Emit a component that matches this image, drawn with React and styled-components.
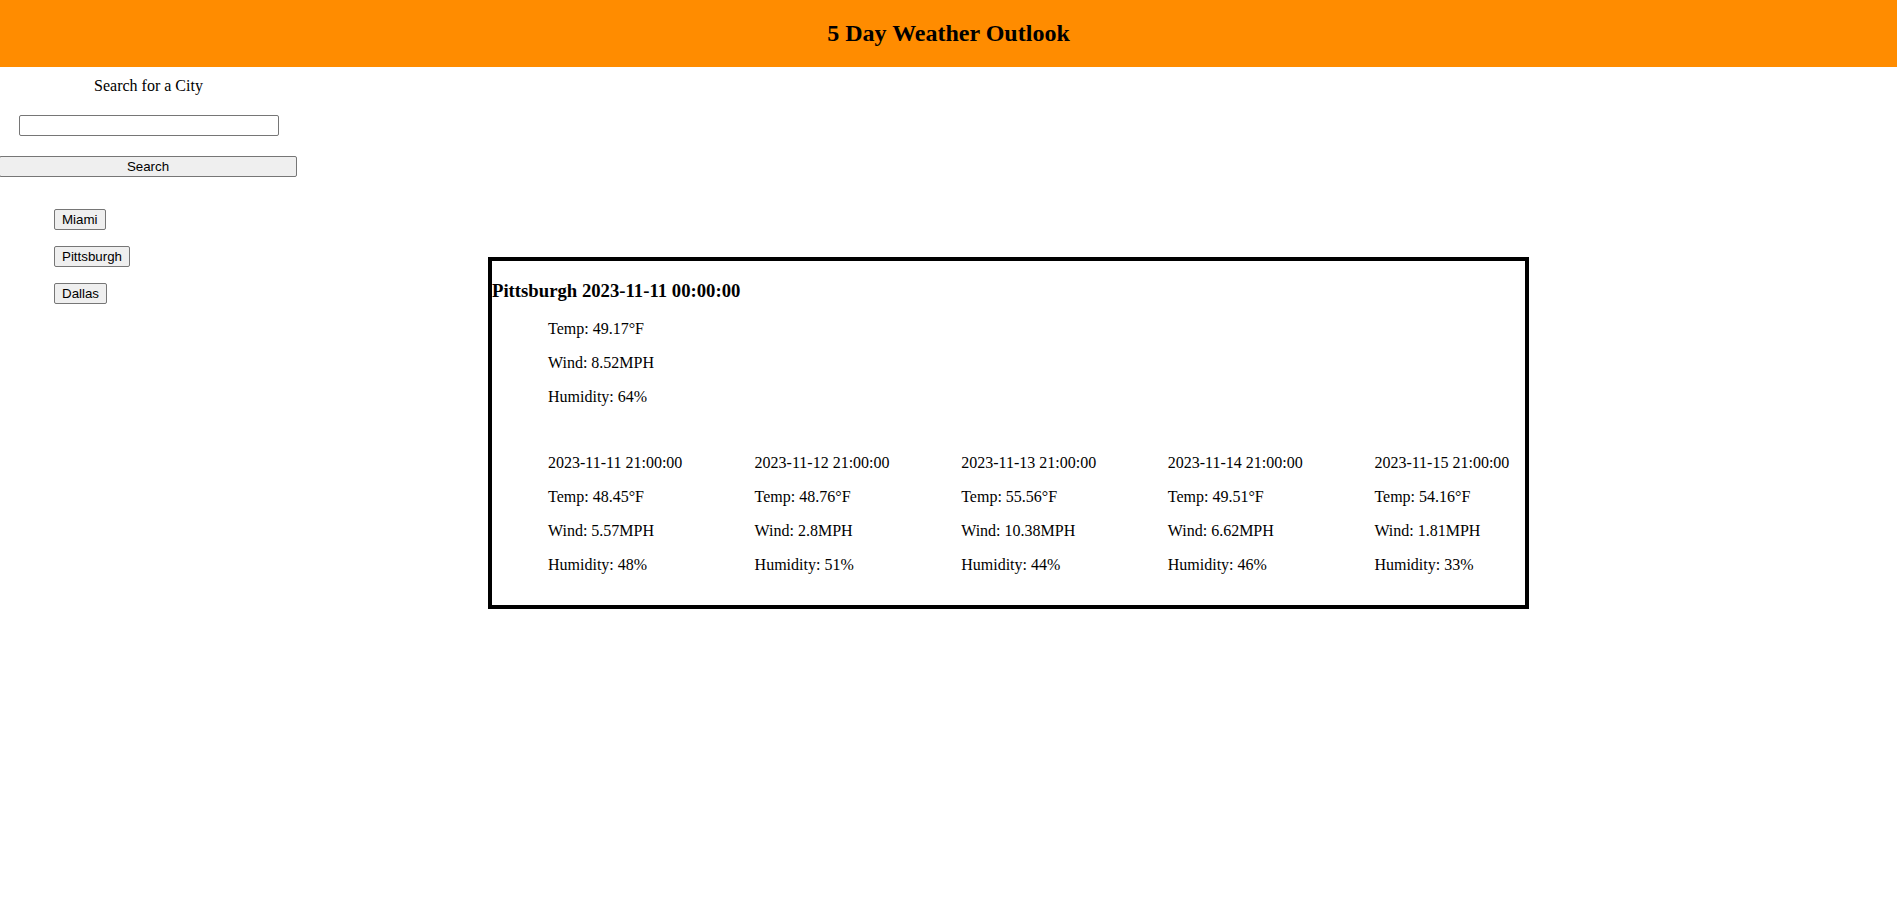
import React, { useState } from 'react';
import styled, { createGlobalStyle } from 'styled-components';

const GlobalStyle = createGlobalStyle`
  body { margin:0; background:#fff; color:#000; font-family:"Liberation Serif", "Times New Roman", serif; }
`;

const Header = styled.header`background:#ff8c00; text-align:center;`;
const Title = styled.h2`margin:0; padding:20px 0; font-size:24px; line-height:27px; font-weight:bold;`;

const Layout = styled.div`display:flex; align-items:flex-start;`;
const Sidebar = styled.aside`width:297px; flex-shrink:0; display:flex; flex-direction:column; align-items:center;`;
const SearchLabel = styled.p`margin:10px 0 0; font-size:16px; line-height:18px;`;
const SearchInput = styled.input`
  box-sizing:border-box; width:260px; height:21px; margin-top:20px; padding:1px 2px;
  border:1px solid #767676; border-radius:2px; background:#fff; font:13.333px "Liberation Sans", Arial, sans-serif;
`;
const Button = styled.button`
  box-sizing:border-box; height:21px; padding:1px 7px; margin:0;
  background:#efefef; color:#000; border:1px solid #767676; border-radius:2px;
  font:13.333px "Liberation Sans", Arial, sans-serif; cursor:pointer;
`;
// the original button runs just past the left edge of the page
const SearchButton = styled(Button)`align-self:flex-end; width:calc(100% + 1px); margin-top:20px;`;
const History = styled.div`align-self:stretch; display:flex; flex-direction:column; align-items:flex-start; gap:16px; margin-top:32px; padding-left:54px;`;

const Main = styled.main`flex:1; min-width:0;`;
const Card = styled.section`box-sizing:border-box; width:1041px; margin:190px 0 0 191px; border:4px solid #000;`;
const CityHeading = styled.h3`margin:18.72px 0; font-size:18.72px; line-height:21.5px; font-weight:bold;`;
const Stats = styled.div`padding-left:56px;`;
const Stat = styled.p`margin:16px 0; font-size:16px; line-height:18px;`;
const Forecast = styled.div`display:flex; margin:32px 0 15px;`;
const Day = styled.div`flex:1; min-width:0; padding-left:56px;`;

const current = { city: 'Pittsburgh', date: '2023-11-11 00:00:00', temp: 49.17, wind: 8.52, humidity: 64 };
const days = [
    { date: '2023-11-11 21:00:00', temp: 48.45, wind: 5.57, humidity: 48 },
    { date: '2023-11-12 21:00:00', temp: 48.76, wind: 2.8, humidity: 51 },
    { date: '2023-11-13 21:00:00', temp: 55.56, wind: 10.38, humidity: 44 },
    { date: '2023-11-14 21:00:00', temp: 49.51, wind: 6.62, humidity: 46 },
    { date: '2023-11-15 21:00:00', temp: 54.16, wind: 1.81, humidity: 33 }
];

export default function App() {
    const [query, setQuery] = useState('');
    const [history] = useState(['Miami', 'Pittsburgh', 'Dallas']);

    return (
        <>
            <GlobalStyle />
            <Header>
                <Title>5 Day Weather Outlook</Title>
            </Header>
            <Layout>
                <Sidebar>
                    <SearchLabel>Search for a City</SearchLabel>
                    <SearchInput value={query} onChange={e => setQuery(e.target.value)} />
                    <SearchButton>Search</SearchButton>
                    <History>
                        {history.map(city => <Button key={city}>{city}</Button>)}
                    </History>
                </Sidebar>
                <Main>
                    <Card>
                        <CityHeading>{current.city} {current.date}</CityHeading>
                        <Stats>
                            <Stat>Temp: {current.temp}°F</Stat>
                            <Stat>Wind: {current.wind}MPH</Stat>
                            <Stat>Humidity: {current.humidity}%</Stat>
                        </Stats>
                        <Forecast>
                            {days.map(d => (
                                <Day key={d.date}>
                                    <Stat>{d.date}</Stat>
                                    <Stat>Temp: {d.temp}°F</Stat>
                                    <Stat>Wind: {d.wind}MPH</Stat>
                                    <Stat>Humidity: {d.humidity}%</Stat>
                                </Day>
                            ))}
                        </Forecast>
                    </Card>
                </Main>
            </Layout>
        </>
    );
}
